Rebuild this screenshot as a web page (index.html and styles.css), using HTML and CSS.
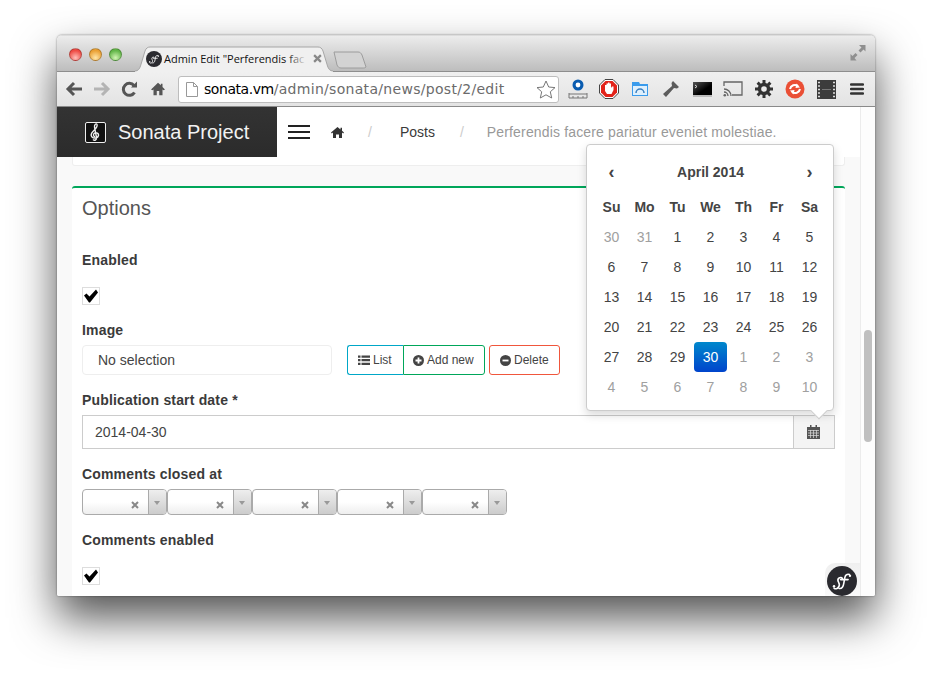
FILE: index.html
```html
<!DOCTYPE html>
<html lang="en">
<head>
<meta charset="utf-8">
<title>Sonata Admin</title>
<link rel="stylesheet" href="styles.css">
</head>
<body>
<svg class="defs" width="0" height="0" aria-hidden="true">
  <symbol id="sf" viewBox="0 0 32 32">
    <circle cx="16" cy="16" r="16" fill="#2a2a2f"/>
    <path d="M7.500 23.500c1.600 1.400 3.400.8 4.600-.8 1.500-1.900 1.300-3.600.3-5.200-.9-1.500-1.300-3.200.2-4.500 1.500-1.200 3-1 3.800.2M13 24c3 .4 4.500-2.400 5-6l1-5.500c.5-2.500 2-4.300 5-3.500M14.500 14.500h8" fill="none" stroke="#fff" stroke-width="1.700" stroke-linecap="round"/>
    <circle cx="7.500" cy="21.500" r="1.300" fill="#fff"/><circle cx="24.500" cy="10.500" r="1.300" fill="#fff"/>
  </symbol>
  <symbol id="check" viewBox="0 0 14 14">
    <path d="M0 6.500 2.500 4.500 5.500 7.500 12 .5 14 3.500 6 13.500 5 13.500z" fill="#000"/>
  </symbol>
  <symbol id="x" viewBox="0 0 8 8">
    <path d="M1 1l6 6M7 1l-6 6" stroke="#888" stroke-width="2" fill="none"/>
  </symbol>
</svg>

<div class="window">
  <header class="titlebar">
    <div class="lights">
      <span class="light red"></span><span class="light amber"></span><span class="light green"></span>
    </div>
    <div class="tab">
      <svg class="tab-shape" width="198" height="26" viewBox="0 0 198 26"><path d="M0 26V25c3 0 4.500-2 5.500-5L10 5c1-3 3-4 5-4h168c2 0 4 1 5 4l4.500 15c1 3 2.500 5 5.500 5v1z" fill="#f0f0f0"/><path d="M0 25c3 0 4.500-2 5.500-5L10 5c1-3 3-4 5-4h168c2 0 4 1 5 4l4.500 15c1 3 2.500 5 5.500 5" fill="none" stroke="#a6a6a6"/></svg>
      <svg class="tab-icon" width="16" height="16"><use href="#sf"/></svg>
      <span class="tab-title">Admin Edit "Perferendis fac</span>
      <span class="tab-fade"></span>
      <svg class="tab-close" width="9" height="9"><use href="#x"/></svg>
    </div>
    <svg class="newtab" width="34" height="18" viewBox="0 0 34 18"><path d="M1 1h24c2 0 3 1 4 3l4 12c-1 1-2 1-3 1H8c-2 0-3-1-4-3z" fill="#d3d3d3" stroke="#9c9c9c"/></svg>
    <svg class="fullscreen" width="16" height="16" viewBox="0 0 16 16"><path d="M9 0h6.500v6.500L13.500 4.500 10.500 7.500 8.500 5.500 11.500 2.500zM.5 9 2.500 11 5.500 8 7.500 10 4.500 13 6.500 15.500H.5z" fill="#8f8f8f"/></svg>
  </header>

  <nav class="toolbar">
    <div class="nav-btns">
      <svg width="18" height="16" viewBox="0 0 18 16"><path d="M17 8H4M9 2 3 8l6 6" fill="none" stroke="#555" stroke-width="3"/></svg>
      <svg width="18" height="16" viewBox="0 0 18 16"><path d="M1 8h13M9 2l6 6-6 6" fill="none" stroke="#b4b4b4" stroke-width="3"/></svg>
      <svg width="18" height="16" viewBox="0 0 18 16"><path d="M13.500 11.500A6 6 0 1 1 13 4.500" fill="none" stroke="#555" stroke-width="3"/><path d="M10 6.500h6V.5z" fill="#555"/></svg>
      <svg width="18" height="16" viewBox="-2 -1 22 18"><path d="M9 .5 .5 8.500 2 9.500 3.500 8.500V15.500H7.500V10.500H10.500V15.500H14.500V8.500L16 9.500 17.500 8.500 14.500 5.500V1.500H12.500V3.500z" fill="#555"/></svg>
    </div>
    <div class="omnibox">
      <svg class="page-icon" width="12" height="15" viewBox="0 0 12 15"><path d="M.5.5h7l4 4v10H.5zM7.500.5v4h4" fill="#fff" stroke="#999"/></svg>
      <span class="url"><span class="url-host">sonata.vm</span><span class="url-path">/admin/sonata/news/post/2/edit</span></span>
      <svg class="star" width="20" height="19" viewBox="0 0 20 19"><path d="M10 1l2.700 6 6.300.6-4.700 4.200 1.400 6.200L10 14.800 4.300 18l1.400-6.200L1 7.600 7.300 7z" fill="#fff" stroke="#777"/></svg>
    </div>
    <div class="ext-icons">
      <svg width="20" height="20" viewBox="0 0 20 20"><circle cx="10" cy="6" r="5.500" fill="#0a5cb0"/><circle cx="10" cy="6" r="2.400" fill="#fff"/><path d="M10 12h0M1 14v5M19 14v5M1 15h18M1 19h18M5 17v2M10 17v2M15 17v2" fill="none" stroke="#777"/></svg>
      <svg width="20" height="20" viewBox="0 0 20 20"><path d="M6 .5h8L19.500 6v8L14 19.500H6L.5 14V6z" fill="#fff" stroke="#444"/><path d="M6.500 2h7L18 6.500v7L13.500 18h-7L2 13.500v-7z" fill="#e2231a"/><path d="M6 9V6h1.500v2.500V4.500H9V8.500V3.500h1.500v5V4.500H12V9l1-1.500h1.500v3.500L12.500 15H8L6 12z" fill="#fff"/></svg>
      <svg width="18" height="16" viewBox="0 0 18 16"><path d="M1 1h7l1 2h8v12H1z" fill="#3a9bec"/><rect x="2" y="5" width="14" height="9" fill="#dff0fd"/><path d="M5 12a4 4 0 0 1 8 0" fill="none" stroke="#3a7fc0" stroke-width="1.500"/></svg>
      <svg width="18" height="18" viewBox="0 0 18 18"><path d="M11 1 17 7l-2 1.500L12 8 4 17 1 14 10 6 9.500 3z" fill="#5c5c5c"/></svg>
      <svg width="19" height="15" viewBox="0 0 19 15"><defs><linearGradient id="term" x1="0" y1="0" x2="1" y2="1"><stop offset="0" stop-color="#555"/><stop offset=".6" stop-color="#000"/></linearGradient></defs><rect width="19" height="13" fill="url(#term)"/><rect y="13" width="19" height="2" fill="#bbb"/><path d="M2 3l2 1.500L2 6" stroke="#ddd" fill="none"/></svg>
      <svg width="20" height="16" viewBox="0 0 20 16"><path d="M1 5V1h18v13H9" fill="none" stroke="#666" stroke-width="1.300"/><path d="M1 8a7 7 0 0 1 7 7M1 11a4 4 0 0 1 4 4" fill="none" stroke="#666" stroke-width="1.300"/><circle cx="1.800" cy="14.200" r="1.300" fill="#666"/></svg>
      <svg width="18" height="18" viewBox="0 0 18 18"><circle cx="9" cy="9" r="4.500" fill="none" stroke="#333" stroke-width="3.500"/><path d="M9 0v18M0 9h18M2.600 2.600l12.800 12.800M15.400 2.600 2.600 15.400" stroke="#333" stroke-width="3"/><circle cx="9" cy="9" r="2.800" fill="#ececec"/></svg>
      <svg width="20" height="20" viewBox="0 0 20 20"><circle cx="10" cy="10" r="9.500" fill="#ea4f35"/><path d="M5 10a5 5 0 0 1 8-3M15 10a5 5 0 0 1-8 3" fill="none" stroke="#fff" stroke-width="2"/><path d="M11.500 4.500 15 8.500 10.500 9zM8.500 15.500 5 11.500 9.500 11z" fill="#fff"/></svg>
      <svg width="19" height="19" viewBox="0 0 19 19"><rect width="19" height="19" fill="#3c3c3c"/><path d="M1 2.500h2M1 6h2M1 9.500h2M1 13h2M1 16.500h2M16 2.500h2M16 6h2M16 9.500h2M16 13h2M16 16.500h2" stroke="#ddd" stroke-width="1.500"/><path d="M5 9.500h9" stroke="#777"/></svg>
      <svg width="14" height="12" viewBox="0 0 14 12"><path d="M1 1.500h12M1 6h12M1 10.500h12" stroke="#333" stroke-width="2.400" stroke-linecap="round"/></svg>
    </div>
  </nav>

  <div class="viewport">
    <main class="page">
      <div class="topbar">
        <a class="brand">
          <svg class="brand-icon" width="21" height="21" viewBox="0 0 21 21"><rect x=".5" y=".5" width="20" height="20" rx="1.500" fill="#111" stroke="#eee"/><path d="M8 17.500c1.500 1.500 4 .5 3.500-2L9.500 5c-.3-2.500 1.800-4 2.500-2.500 1 2.500-2 5-4 7-2 2.200-2.500 4-1 5.500 2 2 6 1.200 6.500-1.500.4-2.500-3.500-4-4.800-1.500-.5 1.200 0 2.500 1.300 2.700" fill="none" stroke="#eee" stroke-width="1.400"/></svg>
          <span>Sonata Project</span>
        </a>
        <span class="burger"><i></i><i></i><i></i></span>
        <ol class="crumbs">
          <li class="crumb-home"><svg width="13" height="11" viewBox="0 0 13 11"><path d="M6.500 0 0 5.500l.8 1L2 5.500V11h3V7.500h3V11h3V5.500l1.200 1 .8-1L11 3.800V.8H9.500v1.700z" fill="#333"/></svg></li>
          <li class="sep sep-first">/</li>
          <li class="crumb-link">Posts</li>
          <li class="sep sep-last">/</li>
          <li class="crumb-current">Perferendis facere pariatur eveniet molestiae.</li>
        </ol>
      </div>

      <div class="content">
        <div class="box-prev"></div>
        <section class="box">
          <h3 class="box-title">Options</h3>

          <div class="group group-first">
            <label class="lbl">Enabled</label>
            <span class="cb"><svg width="14" height="14"><use href="#check"/></svg></span>
          </div>

          <div class="group">
            <label class="lbl">Image</label>
            <div class="image-row">
              <div class="image-field">No selection</div>
              <div class="btn-group">
                <button class="btn btn-list"><svg width="12" height="11" viewBox="0 0 12 11"><path d="M0 .5h2.500v2.200H0zM3.500.5H12v2.200H3.500zM0 4.100h2.500v2.200H0zM3.500 4.100H12v2.200H3.500zM0 7.700h2.500v2.200H0zM3.500 7.700H12v2.200H3.500z" fill="#444"/></svg>List</button>
                <button class="btn btn-add"><svg width="11" height="11" viewBox="0 0 11 11"><circle cx="5.500" cy="5.500" r="5.500" fill="#444"/><path d="M5.500 2.500v6M2.500 5.500h6" stroke="#fff" stroke-width="1.800"/></svg>Add new</button>
              </div>
              <button class="btn btn-del"><svg width="11" height="11" viewBox="0 0 11 11"><circle cx="5.500" cy="5.500" r="5.500" fill="#444"/><path d="M2.500 5.500h6" stroke="#fff" stroke-width="1.800"/></svg>Delete</button>
            </div>
          </div>

          <div class="group">
            <label class="lbl">Publication start date *</label>
            <div class="date-input">
              <span class="date-value">2014-04-30</span>
              <span class="date-addon"><svg width="13" height="14" viewBox="0 0 13 14"><path d="M0 2h13v12H0z" fill="#555"/><path d="M1 5.500h11M1 8h11M1 10.500h11M3.500 5v8M6.500 5v8M9.500 5v8" stroke="#ddd" stroke-width=".7"/><path d="M3 0h1.500v3H3zM8.500 0H10v3H8.500z" fill="#555"/></svg></span>
            </div>
          </div>

          <div class="group">
            <label class="lbl">Comments closed at</label>
            <div class="selects">
              <div class="sel"><svg class="sel-x" width="8" height="8"><use href="#x"/></svg><span class="sel-arrow"></span></div>
              <div class="sel"><svg class="sel-x" width="8" height="8"><use href="#x"/></svg><span class="sel-arrow"></span></div>
              <div class="sel"><svg class="sel-x" width="8" height="8"><use href="#x"/></svg><span class="sel-arrow"></span></div>
              <div class="sel"><svg class="sel-x" width="8" height="8"><use href="#x"/></svg><span class="sel-arrow"></span></div>
              <div class="sel"><svg class="sel-x" width="8" height="8"><use href="#x"/></svg><span class="sel-arrow"></span></div>
            </div>
          </div>

          <div class="group">
            <label class="lbl">Comments enabled</label>
            <span class="cb"><svg width="14" height="14"><use href="#check"/></svg></span>
          </div>
        </section>
      </div>

      <div class="sf-widget"><svg width="30" height="30"><use href="#sf"/></svg></div>
    </main>

    <aside class="scrollbar"><span class="thumb"></span></aside>

    <div class="datepicker">
      <div class="dp-head"><span>‹</span><span class="dp-month">April 2014</span><span>›</span></div>
      <div class="dp-grid">
        <b>Su</b><b>Mo</b><b>Tu</b><b>We</b><b>Th</b><b>Fr</b><b>Sa</b>
        <span class="old">30</span><span class="old">31</span><span>1</span><span>2</span><span>3</span><span>4</span><span>5</span>
        <span>6</span><span>7</span><span>8</span><span>9</span><span>10</span><span>11</span><span>12</span>
        <span>13</span><span>14</span><span>15</span><span>16</span><span>17</span><span>18</span><span>19</span>
        <span>20</span><span>21</span><span>22</span><span>23</span><span>24</span><span>25</span><span>26</span>
        <span>27</span><span>28</span><span>29</span><span class="active">30</span><span class="old">1</span><span class="old">2</span><span class="old">3</span>
        <span class="old">4</span><span class="old">5</span><span class="old">6</span><span class="old">7</span><span class="old">8</span><span class="old">9</span><span class="old">10</span>
      </div>
      <i class="dp-tip"></i>
    </div>
  </div>
</div>
</body>
</html>
```
FILE: styles.css
```css
* { box-sizing: border-box; }
html, body { margin: 0; height: 675px; overflow: hidden; background: #fff; }
body { padding: 35px 0 0 57px; font-family: "Liberation Sans", Arial, sans-serif; color: #3a3a3a; font-size: 14px; }
.defs { position: absolute; }
svg { display: block; flex: none; }

.window {
  width: 818px; height: 561px; display: flex; flex-direction: column;
  border-radius: 5px 5px 2px 2px; overflow: hidden; background: #fff;
  box-shadow: 0 22px 44px rgba(0,0,0,.68), 0 0 2px rgba(0,0,0,.5);
}

/* title bar */
.titlebar {
  height: 36px; flex: none; position: relative; z-index: 1; display: flex; align-items: flex-start;
  background: linear-gradient(#ececec, #bdbdbd); border-top: 1px solid #dcdcdc;
}
.lights { display: flex; gap: 7px; padding: 12px 0 0 12px; }
.light { width: 13px; height: 13px; border-radius: 50%; border: 1px solid rgba(0,0,0,.25); }
.red { background: radial-gradient(circle at 50% 80%, #ffc0ba, #ee4b44 70%); }
.amber { background: radial-gradient(circle at 50% 80%, #ffe6a8, #eaa034 70%); }
.green { background: radial-gradient(circle at 50% 80%, #d2f5b4, #62b648 70%); }
.tab {
  position: relative; width: 198px; height: 26px; margin: 10px 0 0 13px;
  display: flex; align-items: center; padding: 0 0 1px 11px;
}
.tab-shape { position: absolute; left: 0; top: 0; }
.tab-icon { position: relative; margin-right: 2px; }
.tab-title {
  position: relative; white-space: nowrap;
  font: 11px "Open Sans", "DejaVu Sans", sans-serif; color: #111;
}
.tab-fade { position: absolute; left: 152px; top: 4px; width: 20px; height: 18px; background: linear-gradient(90deg, rgba(240,240,240,0), #f0f0f0); }
.tab-close { position: absolute; left: 178px; top: 8px; }
.newtab { margin: 15px 0 0 0; }
.fullscreen { position: absolute; right: 9px; top: 9px; }

/* toolbar */
.toolbar {
  height: 36px; flex: none; display: flex; align-items: center;
  background: linear-gradient(#f0f0f0, #e3e3e3); border-top: 1px solid #8e8e8e; border-bottom: 1px solid #8a8a8a;
  padding-left: 8px;
}
.nav-btns { display: flex; gap: 10px; align-items: center; }
.omnibox {
  width: 381px; height: 27px; margin-left: 11px; display: flex; align-items: center;
  background: #fff; border: 1px solid #bdbdbd; border-radius: 3px; padding: 0 2px 0 7px;
}
.page-icon { margin-right: 6px; }
.url { flex: 1; font: 14px "DejaVu Sans", sans-serif; white-space: nowrap; }
.url-host { color: #000; letter-spacing: -.45px; }
.url-path { color: #6b6b6b; letter-spacing: .3px; }
.ext-icons { display: grid; grid-template-columns: repeat(10, 31px); justify-items: center; align-items: center; margin-left: 3.500px; }

/* viewport */
.viewport { flex: 1; min-height: 0; display: flex; position: relative; overflow: hidden; }
.page { flex: 1; min-width: 0; position: relative; background: #f9f9f9; overflow: hidden; }
.scrollbar { width: 15px; flex: none; background: #fdfdfd; border-left: 1px solid #ececec; padding: 223px 3px 0 3px; }
.thumb { display: block; width: 8px; height: 112px; border-radius: 4px; background: #c0c0c0; }

.topbar { height: 50px; display: flex; align-items: center; background: #fff; }
.brand {
  width: 220px; height: 50px; flex: none; display: flex; align-items: center; gap: 12px; padding-left: 28px;
  background: linear-gradient(#333, #2b2b2b); color: #f2f2f2; font-size: 20px;
}
.burger { display: flex; flex-direction: column; gap: 4px; width: 22px; margin-left: 11px; }
.burger i { display: block; height: 2px; background: #222; }
.crumbs { display: flex; align-items: center; list-style: none; margin: 0; padding: 0 0 0 21px; }
.crumb-home { width: 13px; }
.sep { color: #ccc; }
.sep-first { margin: 0 28px 0 24px; }
.sep-last { margin: 0 23px 0 25px; }
.crumb-current { color: #999; letter-spacing: .16px; white-space: nowrap; }

.content { padding: 0 15px; }
.box-prev { height: 9px; background: #fff; border: 1px solid #eee; border-top: 0; border-radius: 0 0 3px 3px; }
.box { margin-top: 20px; background: #fff; border-top: 2px solid #00a65a; border-radius: 3px 3px 0 0; padding: 0 10px; height: 420px; }
.box-title { margin: 0; padding-top: 9px; font-size: 20px; font-weight: 400; line-height: 22px; color: #555; }
.group { padding-top: 15px; }
.group-first { padding-top: 31px; }
.lbl { display: block; font-weight: 700; font-size: 14px; line-height: 20px; letter-spacing: .17px; color: #3a3a3a; }
.cb { display: flex; align-items: center; justify-content: center; width: 18px; height: 18px; margin-top: 17px; border: 1px solid #ddd; background: #fff; }

.image-row { display: flex; margin-top: 5px; }
.image-field { width: 250px; height: 30px; border: 1px solid #eee; border-radius: 4px; padding-left: 15px; line-height: 28px; font-size: 14px; color: #444; }
.btn-group { display: flex; margin-left: 15px; }
.btn {
  display: flex; align-items: center; gap: 3px; height: 30px; padding: 0 0 0 9px; white-space: nowrap;
  font: 12px "Liberation Sans", Arial, sans-serif; color: #444; background: #fff; border: 1px solid; border-radius: 3px; margin: 0;
}
.btn-list { width: 56px; padding-left: 10px; border-color: #00a7c7; border-right: 0; border-radius: 3px 0 0 3px; }
.btn-add { width: 82px; border-color: #00a65a; border-radius: 0 3px 3px 0; }
.btn-del { width: 71px; margin-left: 4px; padding-left: 10px; border-color: #f0563c; }

.date-input { display: flex; height: 34px; margin-top: 5px; border: 1px solid #ccc; }
.date-value { flex: 1; padding-left: 12px; line-height: 32px; color: #444; }
.date-addon { width: 41px; display: flex; align-items: center; justify-content: center; padding-right: 2px; background: #f4f4f4; border-left: 1px solid #ccc; }

.selects { display: flex; margin-top: 5px; }
.sel {
  position: relative; width: 85px; height: 26px; display: flex; justify-content: flex-end;
  border: 1px solid #aaa; border-radius: 4px; background: linear-gradient(#fff 50%, #eee); overflow: hidden;
}
.sel-x { position: absolute; left: 48px; top: 11px; }
.sel-arrow { width: 18px; position: relative; background: linear-gradient(#eee, #ccc); border-left: 1px solid #aaa; }
.sel-arrow::after {
  content: ""; position: absolute; left: 5px; top: 11px; width: 0; height: 0;
  border-left: 3px solid transparent; border-right: 3px solid transparent; border-top: 4px solid #999;
}

.sf-widget {
  position: absolute; right: 0; bottom: 0; width: 35px; height: 33px; padding: 3px 0 0 2px;
  background: linear-gradient(#efefef, #fafafa); border-radius: 10px 0 0 0;
}

/* datepicker */
.datepicker {
  position: absolute; left: 529px; top: 37px; width: 248px; height: 267px;
  background: #fff; border: 1px solid #ccc; border-radius: 4px; padding: 12px 0 0 8px;
  box-shadow: 0 4px 10px rgba(0,0,0,.15); color: #444;
}
.dp-head { width: 231px; display: grid; grid-template-columns: 33px 1fr 33px; height: 30px; align-items: center; text-align: center; font-weight: 700; font-size: 18px; margin-bottom: 5px; }
.dp-month { font-size: 14px; }
.dp-grid { display: grid; grid-template-columns: repeat(7, 33px); grid-auto-rows: 30px; }
.dp-grid > * { display: flex; align-items: center; justify-content: center; font-size: 14px; }
.dp-grid .old { color: #a0a0a0; }
.dp-grid .active { color: #fff; background: linear-gradient(#08c, #04c); border-radius: 4px; }
.dp-tip {
  position: absolute; right: 8px; bottom: -7px; width: 12px; height: 12px; background: #fff;
  border-right: 1px solid #ccc; border-bottom: 1px solid #ccc; transform: rotate(45deg);
}
```
